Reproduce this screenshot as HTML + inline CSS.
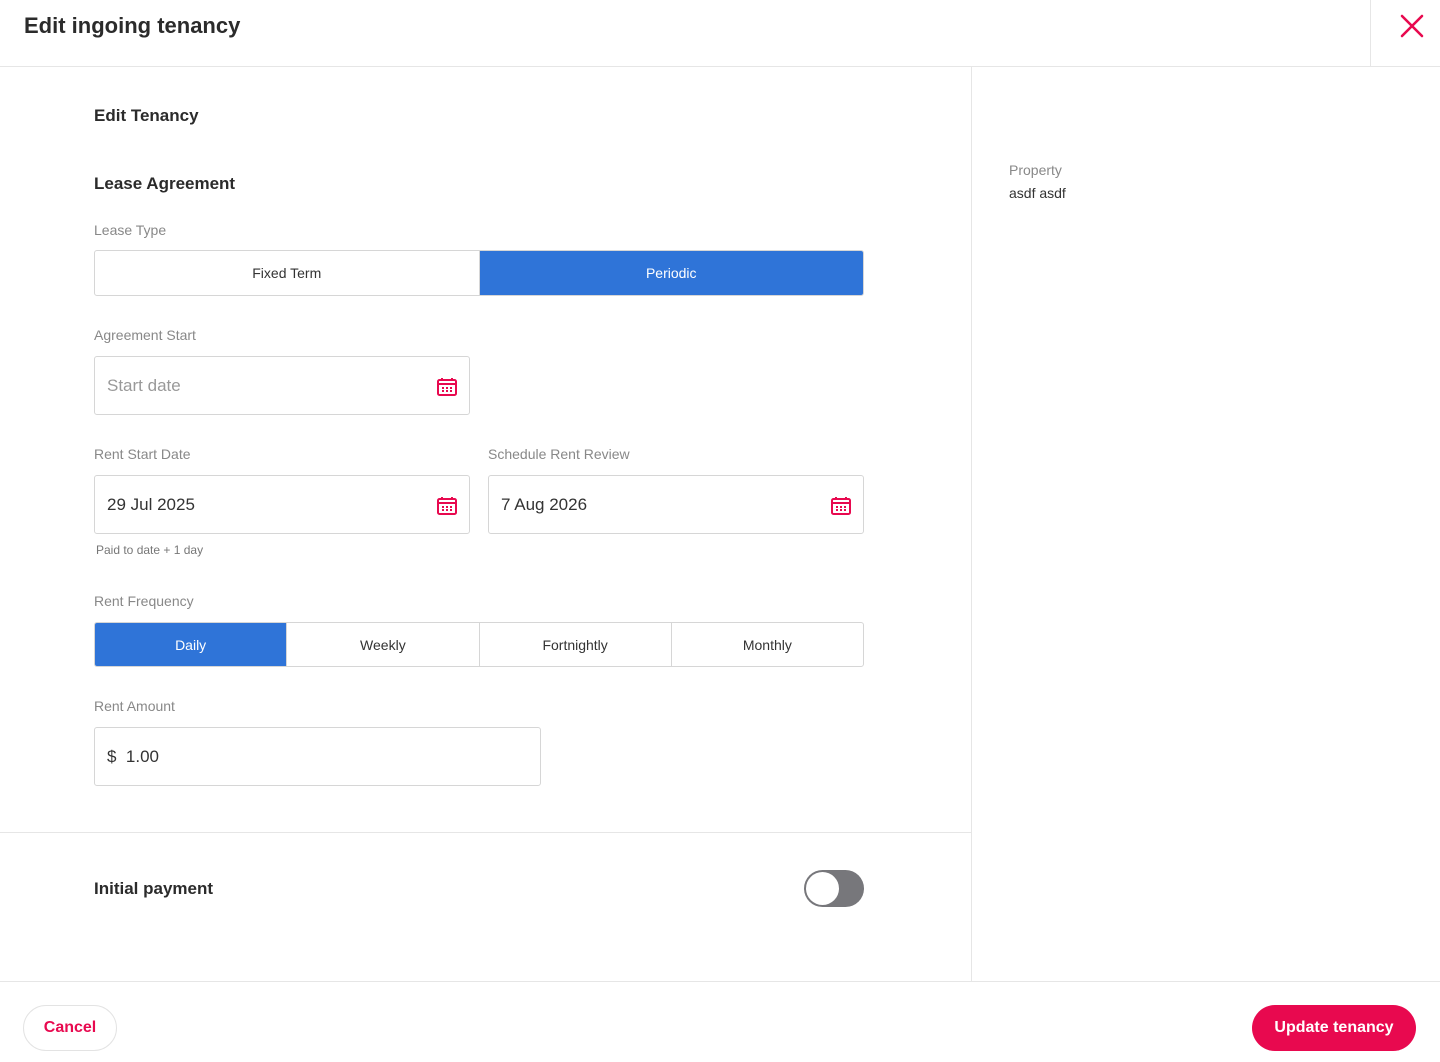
<!DOCTYPE html>
<html><head><style>
*{box-sizing:border-box;margin:0;padding:0}
body{width:1440px;height:1062px;background:#fff;font-family:"Liberation Sans",Arial,sans-serif;color:#333;position:relative;overflow:hidden}
.a{position:absolute}
.lbl{font-size:14px;color:#888}
.h{font-size:17px;font-weight:bold;color:#2b2b2b}
.seg{display:flex;border:1px solid #d6d6d6;border-radius:3px;overflow:hidden}
.seg div{flex:1;display:flex;align-items:center;justify-content:center;font-size:14px;color:#333;border-left:1px solid #d6d6d6}
.seg div:first-child{border-left:none}
.seg .on{background:#2f74d8;color:#fff}
.inp{border:1px solid #d6d6d6;border-radius:3px;display:flex;align-items:center;padding:0 12px;font-size:17px;color:#333}
.cal{position:absolute;right:12px;top:20px}
</style></head><body>
<div class="a" style="left:24px;top:13px;font-size:22px;font-weight:bold;color:#2b2b2b">Edit ingoing tenancy</div>
<div class="a" style="left:0;top:66px;width:1440px;height:1px;background:#e6e6e6"></div>
<div class="a" style="left:1370px;top:0;width:1px;height:66px;background:#e6e6e6"></div>
<svg class="a" style="left:1400px;top:14px" width="24" height="24" viewBox="0 0 24 24"><path d="M2 2L22 22M22 2L2 22" stroke="#e8094f" stroke-width="2.6" stroke-linecap="round"/></svg>
<div class="a" style="left:971px;top:67px;width:1px;height:914px;background:#e6e6e6"></div>
<div class="a" style="left:0;top:832px;width:971px;height:1px;background:#e6e6e6"></div>
<div class="a" style="left:0;top:981px;width:1440px;height:1px;background:#e6e6e6"></div>

<div class="a h" style="left:94px;top:106px">Edit Tenancy</div>
<div class="a h" style="left:94px;top:174px">Lease Agreement</div>
<div class="a lbl" style="left:94px;top:222px">Lease Type</div>
<div class="a seg" style="left:94px;top:250px;width:770px;height:46px"><div>Fixed Term</div><div class="on">Periodic</div></div>

<div class="a lbl" style="left:94px;top:327px">Agreement Start</div>
<div class="a inp" style="left:94px;top:356px;width:376px;height:59px;color:#999">Start date
<svg class="cal" width="20" height="19" viewBox="0 0 20 19"><rect x="1" y="3" width="18" height="15" rx="1.5" fill="none" stroke="#e8094f" stroke-width="2"/><path d="M1 7H19" stroke="#e8094f" stroke-width="2"/><path d="M5 1v3M15 1v3" stroke="#e8094f" stroke-width="2"/><g fill="#e8094f"><rect x="5" y="10" width="2" height="2"/><rect x="9" y="10" width="2" height="2"/><rect x="13" y="10" width="2" height="2"/><rect x="5" y="13" width="2" height="2"/><rect x="9" y="13" width="2" height="2"/><rect x="13" y="13" width="2" height="2"/></g></svg></div>

<div class="a lbl" style="left:94px;top:446px">Rent Start Date</div>
<div class="a lbl" style="left:488px;top:446px">Schedule Rent Review</div>
<div class="a inp" style="left:94px;top:475px;width:376px;height:59px">29 Jul 2025
<svg class="cal" width="20" height="19" viewBox="0 0 20 19"><rect x="1" y="3" width="18" height="15" rx="1.5" fill="none" stroke="#e8094f" stroke-width="2"/><path d="M1 7H19" stroke="#e8094f" stroke-width="2"/><path d="M5 1v3M15 1v3" stroke="#e8094f" stroke-width="2"/><g fill="#e8094f"><rect x="5" y="10" width="2" height="2"/><rect x="9" y="10" width="2" height="2"/><rect x="13" y="10" width="2" height="2"/><rect x="5" y="13" width="2" height="2"/><rect x="9" y="13" width="2" height="2"/><rect x="13" y="13" width="2" height="2"/></g></svg></div>
<div class="a inp" style="left:488px;top:475px;width:376px;height:59px">7 Aug 2026
<svg class="cal" width="20" height="19" viewBox="0 0 20 19"><rect x="1" y="3" width="18" height="15" rx="1.5" fill="none" stroke="#e8094f" stroke-width="2"/><path d="M1 7H19" stroke="#e8094f" stroke-width="2"/><path d="M5 1v3M15 1v3" stroke="#e8094f" stroke-width="2"/><g fill="#e8094f"><rect x="5" y="10" width="2" height="2"/><rect x="9" y="10" width="2" height="2"/><rect x="13" y="10" width="2" height="2"/><rect x="5" y="13" width="2" height="2"/><rect x="9" y="13" width="2" height="2"/><rect x="13" y="13" width="2" height="2"/></g></svg></div>
<div class="a" style="left:96px;top:543px;font-size:12px;color:#777">Paid to date + 1 day</div>

<div class="a lbl" style="left:94px;top:593px">Rent Frequency</div>
<div class="a seg" style="left:94px;top:622px;width:770px;height:45px"><div class="on">Daily</div><div>Weekly</div><div>Fortnightly</div><div>Monthly</div></div>

<div class="a lbl" style="left:94px;top:698px">Rent Amount</div>
<div class="a inp" style="left:94px;top:727px;width:447px;height:59px">$&nbsp;&nbsp;1.00</div>

<div class="a h" style="left:94px;top:879px">Initial payment</div>
<div class="a" style="left:804px;top:870px;width:60px;height:37px;border-radius:19px;background:#77777b"></div>
<div class="a" style="left:806px;top:872px;width:33px;height:33px;border-radius:50%;background:#fff"></div>

<div class="a lbl" style="left:1009px;top:162px">Property</div>
<div class="a" style="left:1009px;top:185px;font-size:14px;color:#333">asdf asdf</div>

<div class="a" style="left:23px;top:1005px;width:94px;height:46px;border:1px solid #e3e3e3;border-radius:23px;display:flex;align-items:center;justify-content:center;color:#e8094f;font-size:16px;font-weight:bold">Cancel</div>
<div class="a" style="left:1252px;top:1005px;width:164px;height:46px;border-radius:23px;background:#e8094f;display:flex;align-items:center;justify-content:center;color:#fff;font-size:16px;font-weight:bold">Update tenancy</div>
</body></html>
